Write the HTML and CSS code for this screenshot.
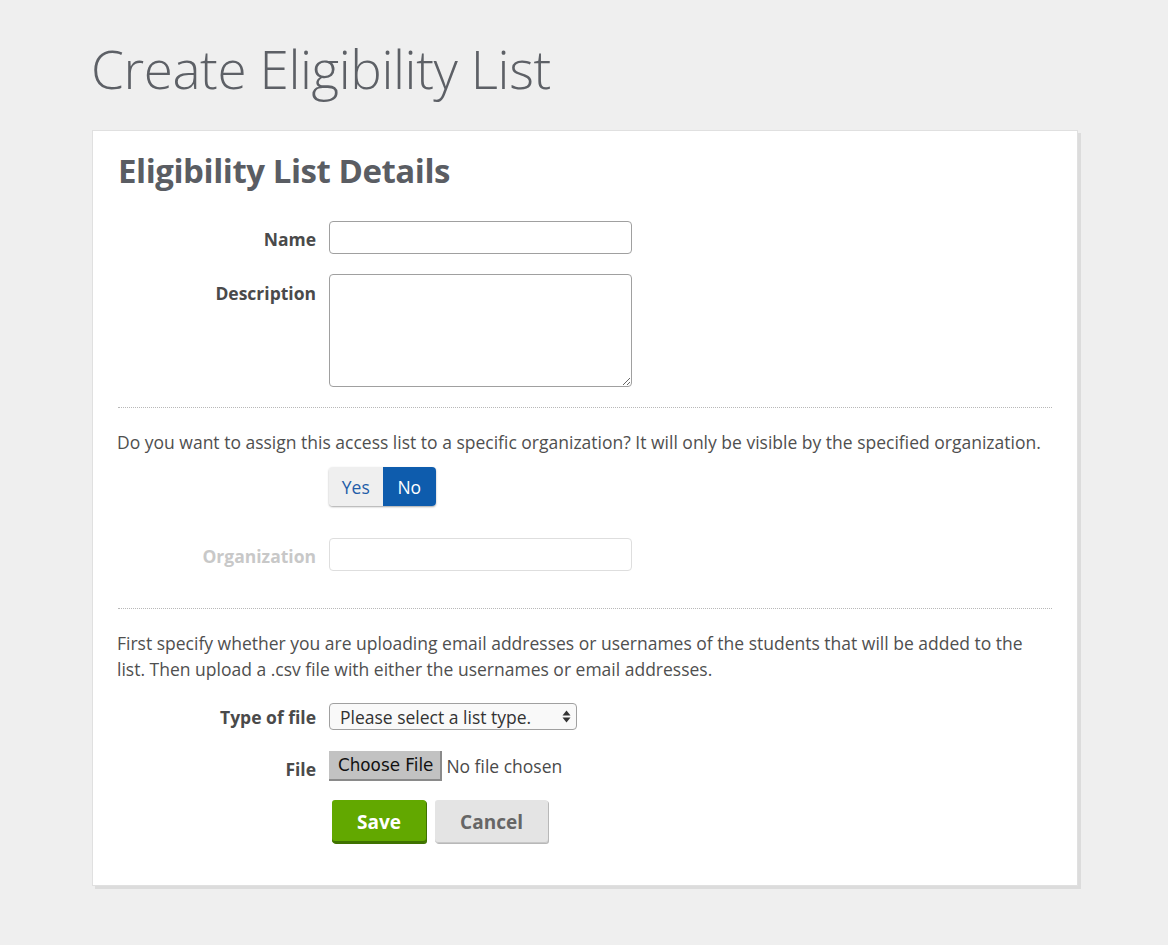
FILE: index.html
```html
<!DOCTYPE html>
<html lang="en">
<head>
  <meta charset="UTF-8" />
  <meta name="viewport" content="width=device-width, initial-scale=1.0" />
  <title>Create Eligibility List</title>
  <link rel="stylesheet" href="styles.css">
</head>
<body>
  <div class="page">
    <h1>Create Eligibility List</h1>

    <div class="card">
      <h2>Eligibility List Details</h2>

      <div class="row">
        <label class="label" for="name">Name</label>
        <input type="text" id="name" class="field" />
      </div>

      <div class="row">
        <label class="label label-desc" for="description">Description</label>
        <textarea id="description" class="field area"></textarea>
      </div>

      <hr class="divider" />

      <p class="note">Do you want to assign this access list to a specific organization? It will only be visible by the specified organization.</p>

      <div class="row row-toggle">
        <span></span>
        <div class="toggle">
          <button class="toggle-opt">Yes</button>
          <button class="toggle-opt active">No</button>
        </div>
      </div>

      <div class="row row-org">
        <label class="label disabled" for="org">Organization</label>
        <input type="text" id="org" class="field field-disabled" disabled />
      </div>

      <hr class="divider" />

      <p class="note note-upload">First specify whether you are uploading email addresses or usernames of the students that will be added to the list. Then upload a .csv file with either the usernames or email addresses.</p>

      <div class="row row-select">
        <label class="label label-tight" for="type">Type of file</label>
        <div class="select-wrap">
          <select id="type" class="select">
            <option>Please select a list type.</option>
            <option>Email addresses</option>
            <option>Usernames</option>
          </select>
          <svg class="select-arrows" width="9" height="13" viewBox="0 0 9 13">
            <path d="M4.5 0.5 L8.5 5.5 L0.5 5.5 Z" fill="#333"/>
            <path d="M4.5 12.5 L8.5 7.5 L0.5 7.5 Z" fill="#333"/>
          </svg>
        </div>
      </div>

      <div class="row row-file">
        <label class="label" for="file">File</label>
        <div class="file-pick">
          <span class="file-btn">Choose File</span>
          <span class="file-name">No file chosen</span>
        </div>
      </div>

      <div class="row row-actions">
        <span></span>
        <div class="actions">
          <button class="btn btn-save">Save</button>
          <button class="btn btn-cancel">Cancel</button>
        </div>
      </div>
    </div>
  </div>
</body>
</html>
```

FILE: styles.css
```css
body {
  margin: 0;
  background: #efefef;
  font-family: 'Open Sans', sans-serif;
  color: #4a4a4a;
}

.page {
  width: 986px;
  margin-left: 92px;
  padding-bottom: 56px;
}

h1 {
  margin: 37px 0 29px -1px;
  font-size: 53px;
  font-weight: 300;
  line-height: 64px;
  color: #5d6066;
  letter-spacing: -0.4px;
}

.card {
  background: #fff;
  border: 1px solid #e0e0e0;
  box-shadow: 3px 3px 0 #dcdcdc;
  padding: 20px 25px 42px 25px;
}

h2 {
  margin: 0 0 30px;
  font-size: 33px;
  font-weight: 700;
  line-height: 40px;
  color: #5a5d63;
  letter-spacing: -0.45px;
}

.row {
  display: grid;
  grid-template-columns: 198px 1fr;
  column-gap: 13px;
  margin-bottom: 20px;
  align-items: start;
}

.label {
  text-align: right;
  font-size: 17.5px;
  font-weight: 700;
  line-height: 26px;
  padding-top: 5px;
  color: #4a4a4a;
}

.label-desc {
  padding-top: 6px;
}

.label-tight {
  padding-top: 1px;
}

.label.disabled {
  color: #c8c8c8;
}

.field {
  width: 303px;
  height: 33px;
  box-sizing: border-box;
  border: 1px solid #a0a0a0;
  border-radius: 4px;
  padding: 4px 8px;
  font-family: 'Open Sans', sans-serif;
  font-size: 17px;
  background: #fff;
  margin: 0;
}

.area {
  height: 113px;
  resize: vertical;
  display: block;
}

.field-disabled {
  border-color: #dedede;
  background: #fff;
}

.divider {
  border: none;
  border-top: 1px dotted #b8b8b8;
  margin: 0 0 21px;
  height: 0;
}

.note {
  margin: 0 0 12px -1px;
  font-size: 17.5px;
  line-height: 26px;
  color: #4f4f4f;
}

.note-upload {
  margin-bottom: 21px;
}

.row-toggle {
  margin-bottom: 32px;
}

.toggle {
  display: flex;
  width: 107px;
  height: 39px;
  border-radius: 4px;
  overflow: hidden;
  box-shadow: 0 1px 2px rgba(0, 0, 0, 0.35);
}

.toggle-opt {
  flex: 1;
  border: none;
  margin: 0;
  padding: 0;
  font-family: 'Open Sans', sans-serif;
  font-size: 17.5px;
  background: #efefef;
  color: #1f5da8;
  cursor: pointer;
}

.toggle-opt.active {
  background: #0e5cad;
  color: #fff;
}

.row-org {
  margin-bottom: 37px;
}

.row-select {
  margin-bottom: 21px;
}

.select-wrap {
  position: relative;
  width: 248px;
}

.select {
  appearance: none;
  -webkit-appearance: none;
  width: 248px;
  height: 27px;
  box-sizing: border-box;
  border: 1px solid #a0a0a0;
  border-radius: 4px;
  background: #f9f9f9;
  padding: 0 24px 0 10px;
  font-family: 'Open Sans', sans-serif;
  font-size: 17.5px;
  color: #333;
  display: block;
}

.select-arrows {
  position: absolute;
  right: 6px;
  top: 7px;
  pointer-events: none;
}

.row-file {
  margin-bottom: 18px;
}

.file-pick {
  display: flex;
  align-items: center;
  height: 30px;
}

.file-btn {
  display: inline-block;
  height: 30px;
  box-sizing: border-box;
  padding: 1px 7px 0 9px;
  background: #c2c2c2;
  border-right: 2px solid #8a8a8a;
  border-bottom: 2px solid #8a8a8a;
  font-family: 'DejaVu Sans', sans-serif;
  font-size: 16.8px;
  line-height: 26px;
  color: #111;
}

.file-name {
  margin-left: 4px;
  font-size: 17.5px;
  color: #4a4a4a;
}

.row-actions {
  margin-bottom: 0;
}

.actions {
  display: flex;
  gap: 9px;
  padding-left: 3px;
}

.btn {
  height: 43px;
  border: none;
  border-radius: 3px;
  font-family: 'Open Sans', sans-serif;
  font-size: 19px;
  font-weight: 700;
  cursor: pointer;
  padding: 0;
}

.btn-save {
  width: 94px;
  background: #62a800;
  color: #fff;
  box-shadow: inset 0 -2px 0 #3f7200, 1px 1px 0 #3f7200;
}

.btn-cancel {
  width: 113px;
  background: #e4e4e4;
  color: #666;
  box-shadow: inset 0 -1px 0 #c8c8c8, 1px 1px 0 #b8b8b8;
}
```
